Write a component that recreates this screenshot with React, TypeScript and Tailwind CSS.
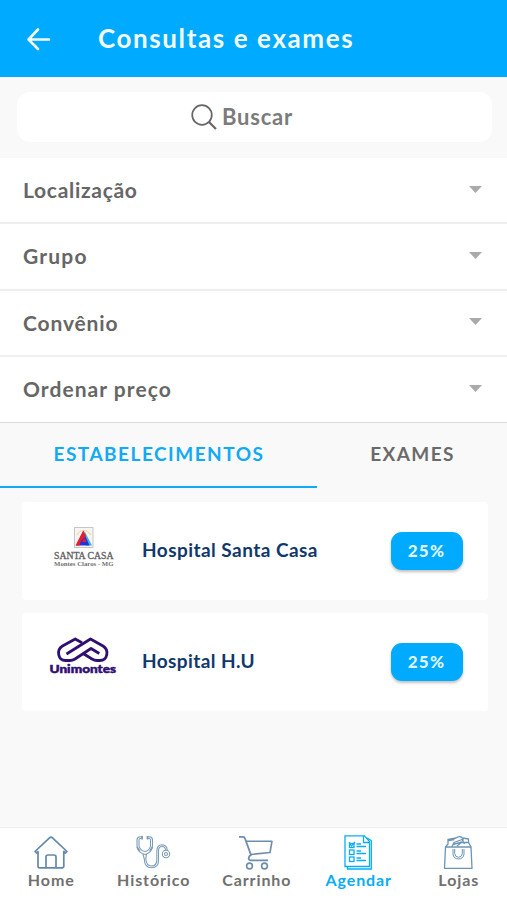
import React from 'react';

const filters = [
  { label: 'Localização', tracking: 'tracking-[0.7px]' },
  { label: 'Grupo', tracking: 'tracking-[1.2px]' },
  { label: 'Convênio', tracking: 'tracking-[0.85px]' },
  { label: 'Ordenar preço', tracking: 'tracking-[1.05px]' },
];

const SantaCasaLogo: React.FC = () => (
  <svg className="mb-[9px]" width="68" height="46" viewBox="0 0 68 46" fill="none">
    <rect x="25.5" y="3.5" width="18.5" height="20" fill="#f8f4ef" stroke="#c9c5c5" />
    <path d="M27.5 11 Q34.5 2 42 11" stroke="#e9dcae" strokeWidth="1.2" />
    <path d="M35.5 7 L43 21.5 H37 Z" fill="#35b5e8" />
    <path d="M34 7 L40.5 21.5 H27 Z" fill="#2432d8" />
    <path d="M34.5 6.5 L37 12 L32 17 L30.5 21.5 H26.5 Z" fill="#ee1c25" />
    <path d="M35.5 14 L37.5 18 H33 Z" fill="#ee1c25" />
    <text x="5" y="35" textLength="59.5" lengthAdjust="spacingAndGlyphs" fontSize="10" fontWeight="400" fill="#5c5c5c" stroke="#5c5c5c" strokeWidth="0.3" className="font-['Liberation_Serif',serif]">SANTA CASA</text>
    <text x="5" y="42" textLength="59.5" lengthAdjust="spacingAndGlyphs" fontSize="6.8" fontWeight="700" fill="#6f6f6f" className="font-['Liberation_Serif',serif]">Montes Claros - MG</text>
  </svg>
);

const UnimontesLogo: React.FC = () => (
  <svg className="mb-[9px]" width="68" height="46" viewBox="0 0 68 46" fill="none">
    <g stroke="#2f1072" strokeWidth="2.8" strokeLinejoin="round">
      <path d="M33 7.8 L26.2 4 L13.5 11 C7 15 9 25.5 16.5 25.5 H21 Q23.5 25.5 26 24 L42 13.5 L50.3 18.5" />
      <path d="M17.5 19 L41.5 4 L54 11 C60.5 15 58.5 25.5 51 25.5 H48 Q45.5 25.5 43 24 L34.5 18.8" />
    </g>
    <text x="0.5" y="37.5" textLength="66.5" lengthAdjust="spacingAndGlyphs" fontSize="11.5" fontWeight="900" fill="#2f1072" stroke="#2f1072" strokeWidth="0.5" className="font-[Lato,sans-serif]">Unimontes</text>
  </svg>
);

const HomeIcon: React.FC = () => (
  <svg width="36" height="36" viewBox="0 0 36 36" fill="none" stroke="#6488aa" strokeWidth="1.7" strokeLinejoin="round">
    <path d="M2 16.5 L16.5 2.8 Q18 1.5 19.5 2.8 L34 16.5 L32.5 18 L30.8 16.5 V31 Q30.8 32.8 29 32.8 H6.5 Q5 32.8 5 31 V16.5 L3.5 18 Z" />
    <path d="M13 32 V22 Q13 20 15 20 H21 Q23 20 23 22 V32" />
  </svg>
);

const StethoscopeIcon: React.FC = () => (
  <svg width="36" height="36" viewBox="0 0 36 36" fill="none" stroke="#7c9cb5" strokeWidth="1.1">
    <path d="M7 1.8 H5 Q2 2 2 5 V11 Q3 18 10 19.5 Q16.500 18 17.5 11 V5 Q17.5 2 14.5 1.8 H12.5" />
    <path d="M7 3.5 H5 Q4 3.5 4 5 V11 Q5 15.5 10 16.5 Q14.5 15.5 15.5 11 V5 Q15.5 3.5 14 3.5 H12.5" />
    <path d="M7 1 V4.5 M12.5 1 V4.5 M2 12 L4.5 16 M17.5 12 L15 16" strokeWidth="1.8" />
    <path d="M8 19 L9.3 24 Q9.5 32.8 16.5 32.8 Q23.5 32.5 23.5 26 V16 Q23.5 11.5 27 11.5 Q30.5 11.5 30.5 15.5" />
    <path d="M11.5 19 L10.8 24 Q11.5 31 16.5 31 Q21.8 31 21.8 25 V16 Q22 9.8 27 9.8 Q32.2 10 32.2 15.5" />
    <circle cx="31" cy="19" r="3.7" />
    <circle cx="31" cy="19" r="1.5" />
  </svg>
);

const CartIcon: React.FC = () => (
  <svg width="36" height="36" viewBox="0 0 36 36" fill="none" stroke="#6d8dad" strokeWidth="1.6" strokeLinejoin="round">
    <path d="M1 1.8 H5 Q6.5 1.8 7 3.5 L13 20 L11.5 21 Q9.5 25 12.500 25.3 H30" strokeWidth="1.8" />
    <path d="M8 6.2 H34 L32 17.5 L12.5 19.5" />
    <circle cx="11.5" cy="31" r="2.9" />
    <circle cx="26.5" cy="31" r="2.9" />
  </svg>
);

const ChecklistIcon: React.FC = () => (
  <svg width="36" height="36" viewBox="0 0 36 36" fill="none" stroke="#08adf5" strokeWidth="1.3">
    <path d="M5 .8 H24.5 L29.5 6.5 V31.5 H5 Z" />
    <path d="M23.5 1 V7.5 H29.5 M7.5 31.5 V34 H31.3 V5.5 L27 3" />
    <rect x="9.5" y="8.5" width="4.5" height="4" />
    <path d="M9 7 L11.5 11 L15 7" />
    <rect x="9.5" y="15" width="4.5" height="4.5" />
    <rect x="9.5" y="22" width="4.5" height="4.5" />
    <path d="M16.5 9 H21 M16.5 11.5 H26 M16.5 16 H21 M16.5 18.5 H26 M16.5 23 H21 M16.5 25.5 H26" />
  </svg>
);

const BagIcon: React.FC = () => (
  <svg width="36" height="36" viewBox="0 0 36 36" fill="none" stroke="#6c94b4" strokeWidth="1.3" strokeLinejoin="round">
    <path d="M5.5 12 H31 L32 33.3 H4.5 Z" />
    <path d="M5.5 12 L8 9 V4.5 L16 3 Q21 0 23 4 L23 6 M8.5 5.5 L14.5 4.5 M12 11.5 L14 7.5 L22 4.5 L24.5 9 M17 11 L21.5 7.5 H28.5 L31 12 M23 3 L28.5 4 V7.5 M13 9.5 L22 7" />
    <path d="M13 14 V19 Q13.5 23.8 18.5 24 Q23.5 23.8 24 19 V14 M14.7 14 V18.5 Q15.2 22.3 18.5 22.3 Q21.8 22.3 22.3 18.5 V14" strokeWidth="1" />
  </svg>
);

const establishments = [
  { name: 'Hospital Santa Casa', discount: '25%', logo: <SantaCasaLogo />, tracking: 'tracking-[0.45px]' },
  { name: 'Hospital H.U', discount: '25%', logo: <UnimontesLogo />, tracking: 'tracking-[0.4px]' },
];

const navItems = [
  { label: 'Home', icon: <HomeIcon />, width: 'w-[101px]', active: false },
  { label: 'Histórico', icon: <StethoscopeIcon />, width: 'w-[104px]', active: false },
  { label: 'Carrinho', icon: <CartIcon />, width: 'w-[102px]', active: false },
  { label: 'Agendar', icon: <ChecklistIcon />, width: 'w-[102px]', active: true },
  { label: 'Lojas', icon: <BagIcon />, width: 'w-[98px]', active: false },
];

export default function App() {
  return (
    <div className="flex h-[900px] w-[507px] flex-col overflow-hidden bg-[#f9f9f9] font-[Lato,sans-serif] font-bold">
      <header className="flex h-[77px] shrink-0 items-center bg-[#00aaff] text-[#f2fbff]">
        <svg className="ml-[26px]" width="26" height="24" viewBox="0 0 26 24" fill="none" stroke="currentColor" strokeWidth="2.6" strokeLinecap="round" strokeLinejoin="round">
          <path d="M12 2.5 L2.5 12.5 L12 22 M2.5 12.5 H23" />
        </svg>
        <h1 className="mb-0.5 ml-[46px] whitespace-nowrap text-[26px] leading-8 tracking-[1.6px]">Consultas e exames</h1>
      </header>

      <div className="pt-[15px] pr-[15px] pb-4 pl-[17px]">
        <div className="flex h-[50px] items-center justify-center gap-1 rounded-[13px] bg-white pr-[26px] text-[#7b7b7b]">
          <svg width="28" height="28" viewBox="0 0 28 28" fill="none" stroke="#666666" strokeWidth="1.7">
            <circle cx="12" cy="12" r="9.8" />
            <path d="M19 19 L26 26" strokeWidth="2.2" />
          </svg>
          <span className="text-[22px] leading-7 tracking-[0.75px]">Buscar</span>
        </div>
      </div>

      <div>
        {filters.map((filter) => (
          <div key={filter.label} className="flex h-[66.25px] items-center justify-between border-b-2 border-[#eeeeee] bg-white pr-[25px] pl-[23px] last:border-b last:border-[#dddddd]">
            <span className={`text-[21px] leading-7 text-[#666666] ${filter.tracking}`}>{filter.label}</span>
            <svg className="-mt-0.5" width="13" height="7" viewBox="0 0 13 7">
              <path d="M0 0 H13 L6.5 7 Z" fill="#aaaaaa" />
            </svg>
          </div>
        ))}
      </div>

      <div className="flex h-[65px] shrink-0 text-[19px] leading-6">
        <div className="flex w-[317px] items-center justify-center border-b-[2.5px] border-[#11aaf4] pb-px pl-px text-[#11aaf4]">
          <span className="tracking-[1.5px]">ESTABELECIMENTOS</span>
        </div>
        <div className="flex flex-1 items-center justify-center pb-[3px] pl-px text-[#6a6a6a]">
          <span className="tracking-[1.4px]">EXAMES</span>
        </div>
      </div>

      <div className="flex flex-1 flex-col gap-[13px] pt-[14px] pr-[19px] pl-[22px]">
        {establishments.map((item) => (
          <div key={item.name} className="flex h-[98px] items-center rounded-sm bg-white pr-[25.5px] pl-[27px]">
            {item.logo}
            <span className={`mb-0.5 ml-[25px] flex-1 whitespace-nowrap text-[19px] leading-6 text-[#11386c] ${item.tracking}`}>{item.name}</span>
            <span className="flex h-[38px] w-[72px] items-center justify-center rounded-[11px] bg-[#00aaff] pb-px text-[17px] font-black tracking-[1.3px] text-[#dff5ff] shadow-[0_2px_3px_rgba(0,0,0,0.25)]">
              {item.discount}
            </span>
          </div>
        ))}
      </div>

      <nav className="flex h-[73px] shrink-0 border-t border-[#eeeeee] bg-white pt-[7px]">
        {navItems.map((item) => (
          <div key={item.label} className={`flex shrink-0 flex-col items-center ${item.width} ${item.active ? 'text-[#08adf5]' : 'text-[#707070]'}`}>
            {item.icon}
            <span className="-mt-px pl-[1.5px] text-[16px] leading-5 tracking-[0.9px]">{item.label}</span>
          </div>
        ))}
      </nav>
    </div>
  );
}
